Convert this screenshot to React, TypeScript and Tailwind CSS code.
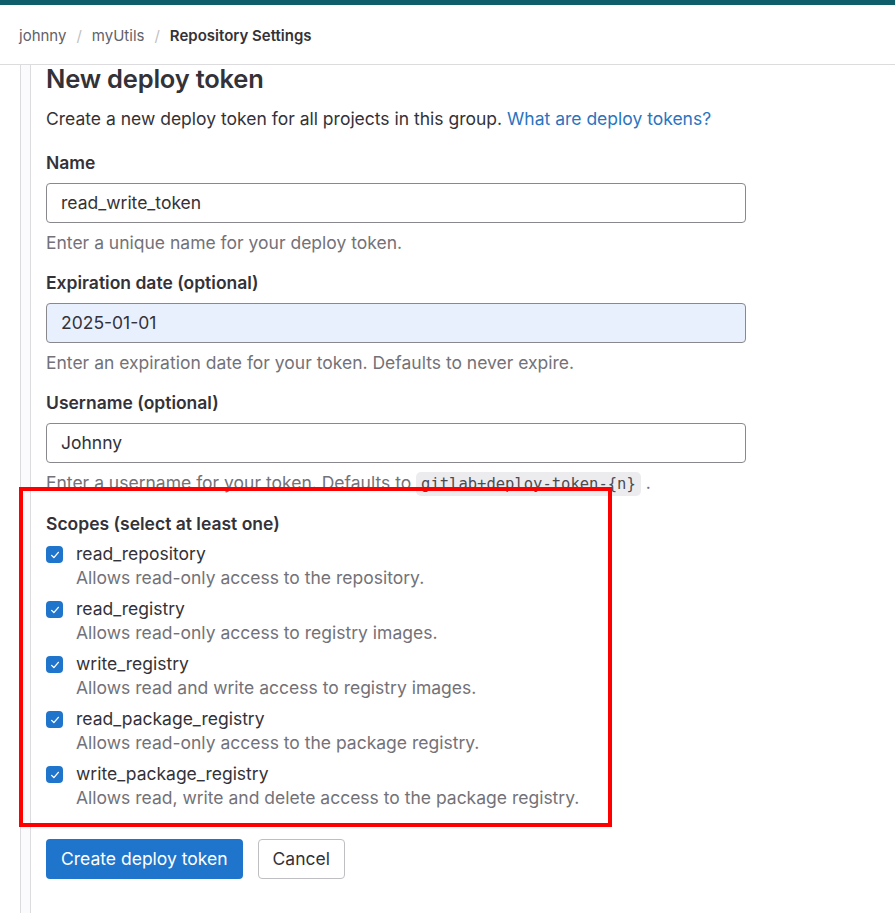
import React from "react";

const scopes = [
  ["read_repository", "Allows read-only access to the repository."],
  ["read_registry", "Allows read-only access to registry images."],
  ["write_registry", "Allows read and write access to registry images."],
  ["read_package_registry", "Allows read-only access to the package registry."],
  ["write_package_registry", "Allows read, write and delete access to the package registry."],
];

function Check() {
  return (
    <span className="mt-[5px] flex h-[17px] w-[17px] shrink-0 items-center justify-center rounded-[4px] bg-[#1f75cb]">
      <svg width="12" height="12" viewBox="0 0 16 16" fill="none">
        <path d="M3.5 8.5l3 3 6-7" stroke="white" strokeWidth="1.8" strokeLinecap="round" strokeLinejoin="round" />
      </svg>
    </span>
  );
}

export default function App() {
  return (
    <div
      className="relative flex min-h-[913px] w-full flex-col bg-white text-[#333238]"
      style={{ fontFamily: "Inter, 'Noto Sans', sans-serif" }}
    >
      <div className="h-[5px] w-full bg-[#0f5e6c]" />
      <div className="flex h-[60px] items-center border-b border-[#dcdcde] pl-[19px] pt-[3px] text-[15px]">
        <span className="text-[#626168]">johnny</span>
        <span className="mx-[10px] text-[#bfbfc3]">/</span>
        <span className="text-[#626168]">myUtils</span>
        <span className="mx-[10px] text-[#bfbfc3]">/</span>
        <span className="font-semibold text-[#333238]">Repository Settings</span>
      </div>
      <div className="flex flex-1">
        <div className="ml-[20px] w-[11px] border-x border-[#dcdcde] bg-[#fbfafd]" />
        <div className="flex flex-col pl-[15px] text-[17.5px] leading-[24px]">
          <h1 className="text-[25.5px] font-semibold leading-[28px] tracking-[-0.2px]">New deploy token</h1>
          <p className="mt-[14px]">
            Create a new deploy token for all projects in this group.{" "}
            <span className="text-[#2a74c0]">What are deploy tokens?</span>
          </p>

          <label className="mt-[20px] font-semibold">Name</label>
          <div className="mt-[8px] flex h-[40px] w-[700px] items-center rounded-[4px] border border-[#89888d] px-[14px]">
            read_write_token
          </div>
          <p className="mt-[8px] text-[#737278]">Enter a unique name for your deploy token.</p>

          <label className="mt-[16px] font-semibold">Expiration date (optional)</label>
          <div className="mt-[8px] flex h-[40px] w-[700px] items-center rounded-[4px] border border-[#89888d] bg-[#e8f0fe] px-[14px]">
            2025-01-01
          </div>
          <p className="mt-[8px] text-[#737278]">Enter an expiration date for your token. Defaults to never expire.</p>

          <label className="mt-[16px] font-semibold">Username (optional)</label>
          <div className="mt-[8px] flex h-[40px] w-[700px] items-center rounded-[4px] border border-[#89888d] px-[14px]">
            Johnny
          </div>
          <p className="mt-[8px] text-[#737278]">
            Enter a username for your token. Defaults to{" "}
            <code
              className="rounded-[5px] bg-[#ececef] px-[5px] py-[3px] text-[15.5px] text-[#4c4b51]"
              style={{ fontFamily: "'DejaVu Sans Mono', 'Liberation Mono', monospace" }}
            >
              gitlab+deploy-token-{"{n}"}
            </code>{" "}
            .
          </p>

          <label className="mt-[16px] font-semibold">Scopes (select at least one)</label>
          <div className="mt-[5px] flex flex-col gap-[6px]">
            {scopes.map(([name, desc]) => (
              <div key={name} className="flex">
                <Check />
                <div className="ml-[13px] flex flex-col">
                  <span className="leading-[25px]">{name}</span>
                  <span className="leading-[24px] text-[#737278]">{desc}</span>
                </div>
              </div>
            ))}
          </div>

          <div className="mt-[29px] flex">
            <button className="h-[40px] rounded-[4px] bg-[#1f75cb] px-[15px] text-[17.5px] text-white">
              Create deploy token
            </button>
            <button className="ml-[15px] h-[40px] rounded-[4px] border border-[#bfbfc3] bg-white px-[14px] text-[17.5px] text-[#333238]">
              Cancel
            </button>
          </div>
        </div>
      </div>
      <div className="pointer-events-none absolute left-[19px] top-[487px] h-[340px] w-[593px] border-[4px] border-[#ff0000]" />
    </div>
  );
}
